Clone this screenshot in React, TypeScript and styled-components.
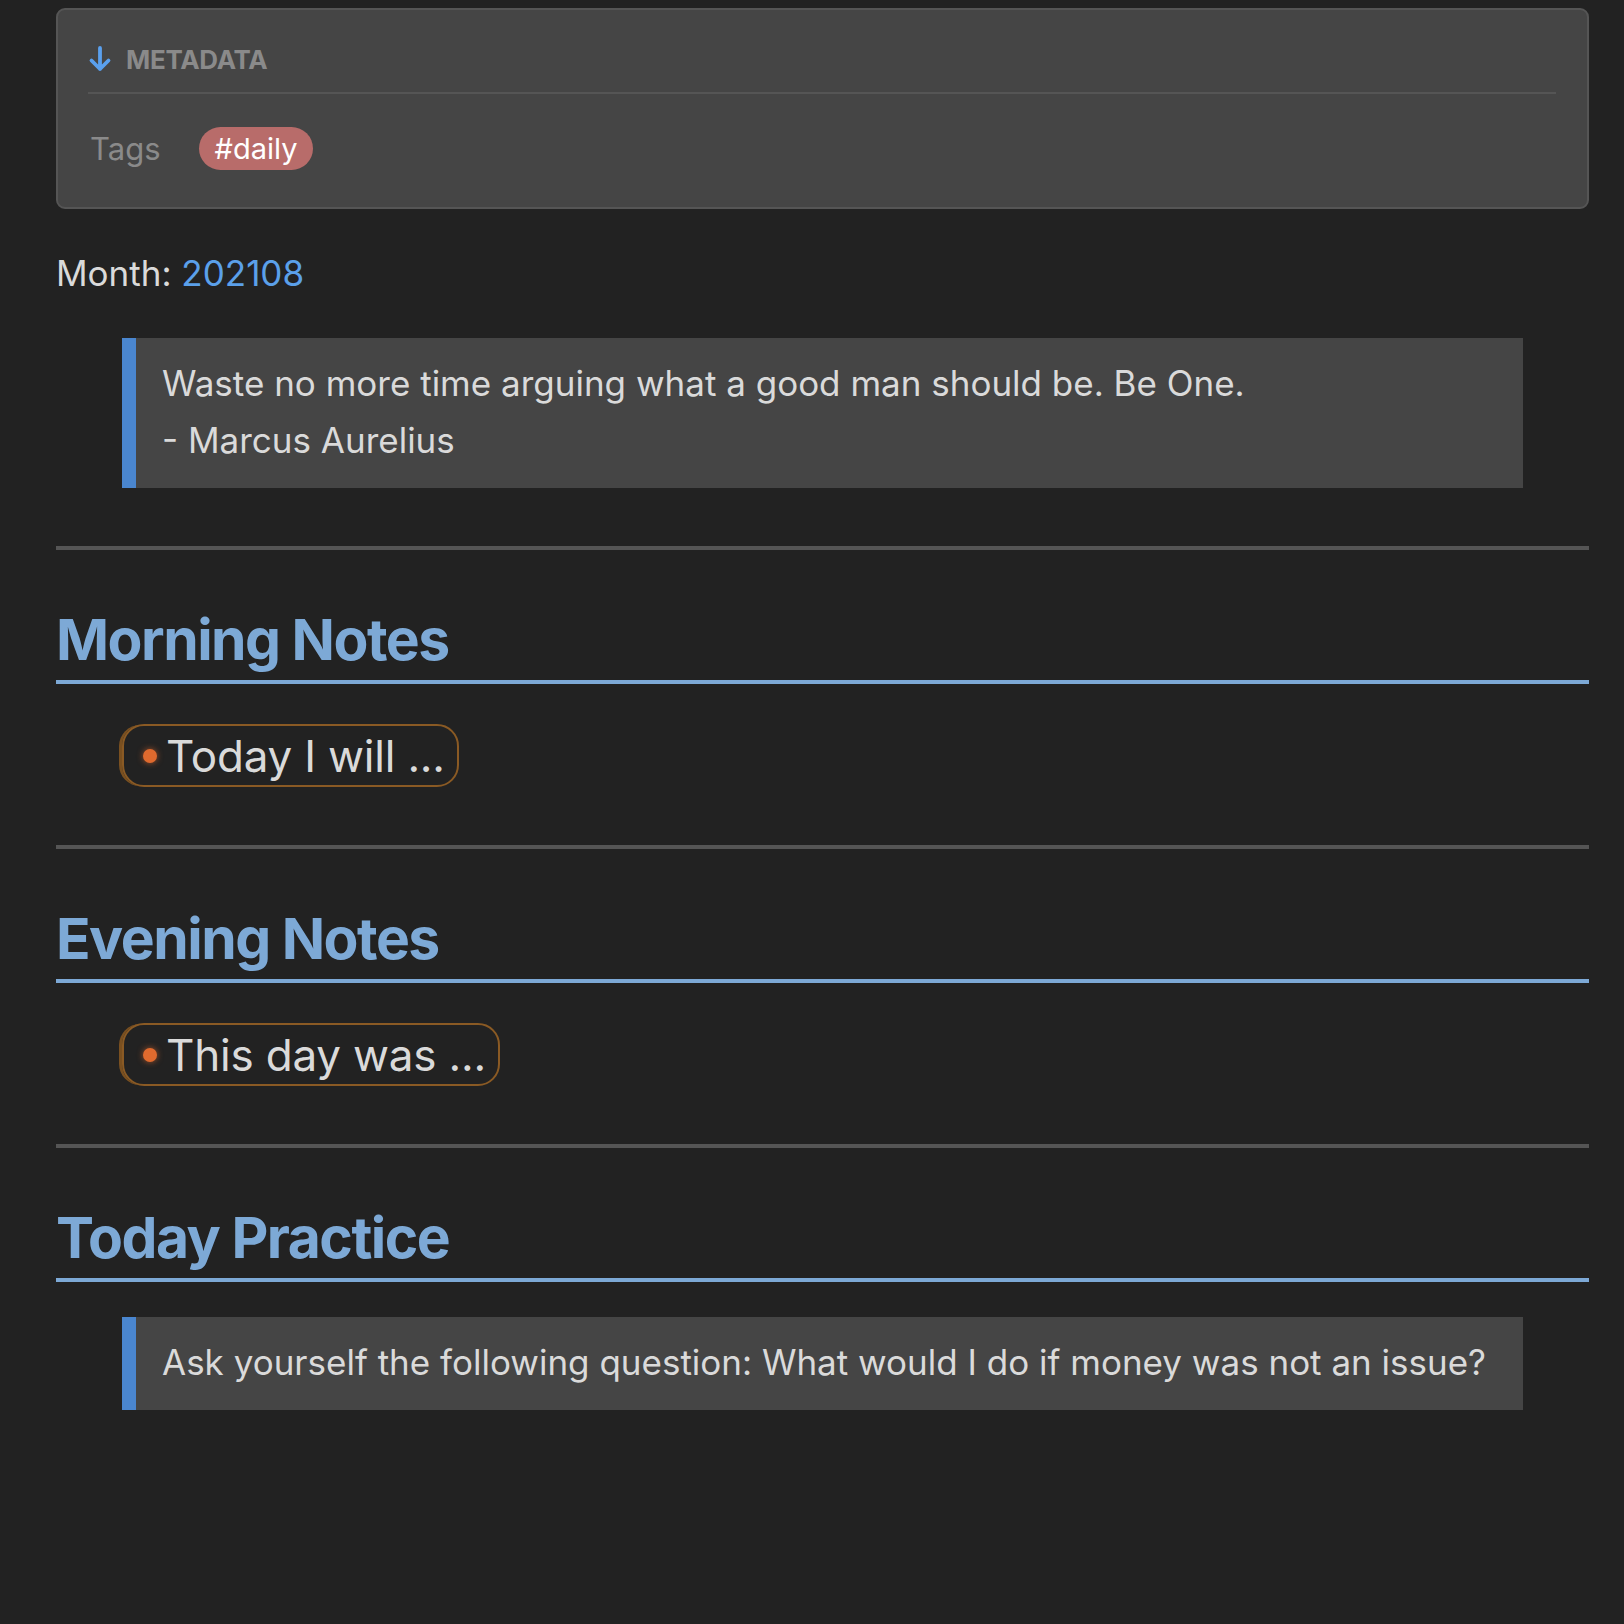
import React from "react";
import styled, { createGlobalStyle } from "styled-components";

const GlobalStyle = createGlobalStyle`
  html, body {
    margin: 0;
    padding: 0;
    background: #222222;
  }
  body {
    font-family: Inter, "Noto Sans", sans-serif;
    color: #dadada;
  }
`;

const sections = [
  { title: "Morning Notes", item: "Today I will ..." },
  { title: "Evening Notes", item: "This day was ..." },
];

const DownArrow = () => (
  <svg width="24" height="26" viewBox="0 0 24 26" fill="none">
    <path
      d="M12 2v21M3.5 14.5l8.5 8.5 8.5-8.5"
      stroke="#5aa0ee"
      strokeWidth="3.8"
      strokeLinecap="round"
      strokeLinejoin="round"
    />
  </svg>
);

const App = () => {
  return (
    <>
      <GlobalStyle />
      <Page>
        <MetaBox>
          <MetaHeader>
            <DownArrow />
            <MetaTitle>METADATA</MetaTitle>
          </MetaHeader>
          <MetaRow>
            <MetaKey>Tags</MetaKey>
            <Tag>#daily</Tag>
          </MetaRow>
        </MetaBox>

        <Paragraph>
          Month: <Link>202108</Link>
        </Paragraph>

        <Quote $top={39}>
          <QuoteLine>Waste no more time arguing what a good man should be. Be One.</QuoteLine>
          <QuoteLine>- Marcus Aurelius</QuoteLine>
        </Quote>

        {sections.map((s) => (
          <Section key={s.title}>
            <Rule />
            <Heading>{s.title}</Heading>
            <List>
              <Item>
                <Dot />
                {s.item}
              </Item>
            </List>
          </Section>
        ))}

        <Section>
          <Rule />
          <Heading>Today Practice</Heading>
          <Quote $top={35}>
            <QuoteLine>
              Ask yourself the following question: What would I do if money was not an issue?
            </QuoteLine>
          </Quote>
        </Section>
      </Page>
    </>
  );
};

export default App;

const Page = styled.div`
  width: 1624px;
  min-height: 1624px;
  box-sizing: border-box;
  padding: 8px 35px 0 56px;
  display: flex;
  flex-direction: column;
`;

const MetaBox = styled.div`
  background: #454545;
  border: 2px solid #555555;
  border-radius: 9px;
  padding: 0 31px 0 30px;
  height: 201px;
  box-sizing: border-box;
`;

const MetaHeader = styled.div`
  display: flex;
  align-items: center;
  gap: 14px;
  height: 84px;
  padding-top: 16px;
  box-sizing: border-box;
  border-bottom: 2px solid #555555;
`;

const MetaTitle = styled.span`
  font-size: 26px;
  font-weight: 700;
  color: #8a8a8a;
  letter-spacing: -0.3px;
`;

const MetaRow = styled.div`
  display: flex;
  align-items: center;
  gap: 38px;
  height: 110px;
  padding-bottom: 2px;
  box-sizing: border-box;
`;

const MetaKey = styled.span`
  font-size: 31px;
  color: #8a8a8a;
  padding-left: 2px;
`;

const Tag = styled.span`
  display: inline-flex;
  align-items: center;
  height: 43px;
  padding: 0 16px;
  border-radius: 22px;
  background: #b86c6a;
  color: #ffffff;
  font-size: 29px;
`;

const Paragraph = styled.p`
  margin: 39px 0 0;
  font-size: 35px;
  line-height: 51px;
  color: #dadada;
`;

const Link = styled.span`
  color: #5ba0ea;
`;

const Quote = styled.blockquote<{ $top: number }>`
  margin: ${({ $top }) => $top}px 66px 0;
  background: #454545;
  border-left: 14px solid #4a86cf;
  padding: 17px 26px 19px;
`;

const QuoteLine = styled.div`
  font-size: 35px;
  line-height: 57px;
  color: #dadada;
`;

const Section = styled.section`
  display: flex;
  flex-direction: column;
`;

const Rule = styled.hr`
  margin: 58px 0 0;
  border: none;
  height: 4px;
  background: #555555;
`;

const Heading = styled.h2`
  margin: 56px 0 0;
  font-size: 57px;
  font-weight: 700;
  letter-spacing: -1.5px;
  line-height: 68px;
  color: #7da9d6;
  padding-bottom: 6px;
  border-bottom: 4px solid #7da9d6;
`;

const List = styled.ul`
  list-style: none;
  margin: 40px 0 0;
  padding: 0 0 0 66px;
`;

const Item = styled.li`
  display: inline-flex;
  align-items: center;
  gap: 9px;
  height: 63px;
  box-sizing: border-box;
  padding: 0 12px 0 19px;
  border: 2px solid #8a5a24;
  border-radius: 22px;
  box-shadow: -4px 0 0 -1px #7a5020;
  font-size: 44px;
  letter-spacing: -0.2px;
  color: #dadada;
`;

const Dot = styled.span`
  width: 14px;
  height: 14px;
  border-radius: 50%;
  background: #e06a2e;
  box-shadow: 0 0 6px rgba(224, 106, 46, 0.7);
  flex: none;
`;
